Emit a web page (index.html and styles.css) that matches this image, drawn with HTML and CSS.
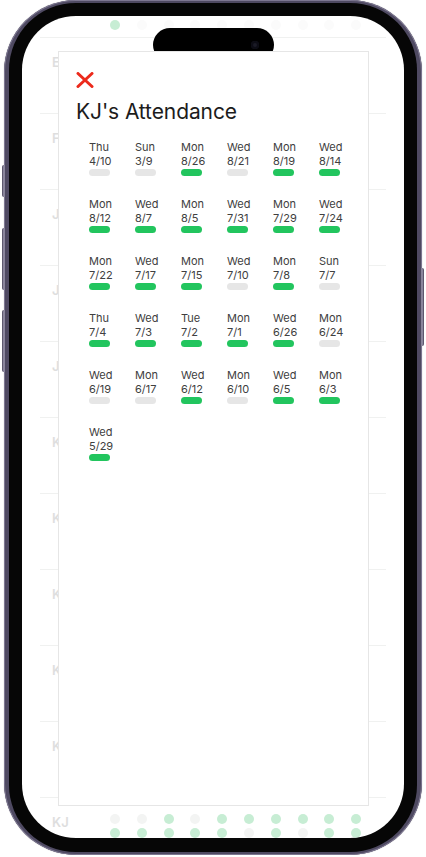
FILE: index.html
```html
<!DOCTYPE html>
<html lang="en">
<head>
<meta charset="utf-8">
<title>KJ's Attendance</title>
<link rel="stylesheet" href="styles.css">
</head>
<body>
<div class="phone">
  <span class="hw hw-action"></span>
  <span class="hw hw-volup"></span>
  <span class="hw hw-voldown"></span>
  <span class="hw hw-power"></span>
  <div class="bezel">
    <div class="screen">
      <div class="list">
        <div class="row">
          <span class="label"></span>
          <div class="dots">
            <i class="d"></i><i class="d"></i><i class="d g"></i><i class="d"></i><i class="d g"></i><i class="d g"></i><i class="d"></i><i class="d"></i><i class="d"></i><i class="d"></i>
            <i class="d"></i><i class="d"></i><i class="d"></i><i class="d"></i><i class="d"></i><i class="d"></i><i class="d"></i><i class="d"></i><i class="d"></i><i class="d"></i>
            <i class="d"></i><i class="d"></i><i class="d"></i><i class="d"></i><i class="d"></i><i class="d"></i><i class="d"></i><i class="d"></i><i class="d"></i><i class="d"></i>
            <i class="d g"></i><i class="d f"></i><i class="d f"></i><i class="d f"></i><i class="d f"></i><i class="d f"></i><i class="d f"></i><i class="d f"></i><i class="d f"></i><i class="d f"></i>
          </div>
        </div>
        <div class="row"><span class="label">EM</span></div>
        <div class="row"><span class="label">FR</span></div>
        <div class="row"><span class="label">JD</span></div>
        <div class="row"><span class="label">JL</span></div>
        <div class="row"><span class="label">JP</span></div>
        <div class="row"><span class="label">KA</span></div>
        <div class="row"><span class="label">KB</span></div>
        <div class="row"><span class="label">KC</span></div>
        <div class="row"><span class="label">KD</span></div>
        <div class="row"><span class="label">KE</span></div>
        <div class="row">
          <span class="label">KJ</span>
          <div class="dots">
            <i class="d"></i><i class="d"></i><i class="d g"></i><i class="d"></i><i class="d g"></i><i class="d g"></i><i class="d g"></i><i class="d g"></i><i class="d g"></i><i class="d g"></i>
            <i class="d g"></i><i class="d g"></i><i class="d g"></i><i class="d g"></i><i class="d g"></i><i class="d"></i><i class="d g"></i><i class="d"></i><i class="d g"></i><i class="d g"></i>
          </div>
        </div>
      </div>

      <div class="island"><span class="cam"></span></div>

      <div class="card">
        <svg class="close" width="18" height="16" viewBox="0 0 18 16" aria-label="Close">
          <path d="M2 1.5 L16 14.5 M16 1.5 L2 14.5" stroke="#ec2a1c" stroke-width="3" stroke-linecap="round" fill="none"/>
        </svg>
        <h1 class="title">KJ's Attendance</h1>
        <div class="grid">
          <div class="item"><div class="txt">Thu</div><div class="txt">4/10</div><div class="bar"></div></div>
          <div class="item"><div class="txt">Sun</div><div class="txt">3/9</div><div class="bar"></div></div>
          <div class="item"><div class="txt">Mon</div><div class="txt">8/26</div><div class="bar on"></div></div>
          <div class="item"><div class="txt">Wed</div><div class="txt">8/21</div><div class="bar"></div></div>
          <div class="item"><div class="txt">Mon</div><div class="txt">8/19</div><div class="bar on"></div></div>
          <div class="item"><div class="txt">Wed</div><div class="txt">8/14</div><div class="bar on"></div></div>

          <div class="item"><div class="txt">Mon</div><div class="txt">8/12</div><div class="bar on"></div></div>
          <div class="item"><div class="txt">Wed</div><div class="txt">8/7</div><div class="bar on"></div></div>
          <div class="item"><div class="txt">Mon</div><div class="txt">8/5</div><div class="bar on"></div></div>
          <div class="item"><div class="txt">Wed</div><div class="txt">7/31</div><div class="bar on"></div></div>
          <div class="item"><div class="txt">Mon</div><div class="txt">7/29</div><div class="bar on"></div></div>
          <div class="item"><div class="txt">Wed</div><div class="txt">7/24</div><div class="bar on"></div></div>

          <div class="item"><div class="txt">Mon</div><div class="txt">7/22</div><div class="bar on"></div></div>
          <div class="item"><div class="txt">Wed</div><div class="txt">7/17</div><div class="bar on"></div></div>
          <div class="item"><div class="txt">Mon</div><div class="txt">7/15</div><div class="bar on"></div></div>
          <div class="item"><div class="txt">Wed</div><div class="txt">7/10</div><div class="bar"></div></div>
          <div class="item"><div class="txt">Mon</div><div class="txt">7/8</div><div class="bar on"></div></div>
          <div class="item"><div class="txt">Sun</div><div class="txt">7/7</div><div class="bar"></div></div>

          <div class="item"><div class="txt">Thu</div><div class="txt">7/4</div><div class="bar on"></div></div>
          <div class="item"><div class="txt">Wed</div><div class="txt">7/3</div><div class="bar on"></div></div>
          <div class="item"><div class="txt">Tue</div><div class="txt">7/2</div><div class="bar on"></div></div>
          <div class="item"><div class="txt">Mon</div><div class="txt">7/1</div><div class="bar on"></div></div>
          <div class="item"><div class="txt">Wed</div><div class="txt">6/26</div><div class="bar on"></div></div>
          <div class="item"><div class="txt">Mon</div><div class="txt">6/24</div><div class="bar"></div></div>

          <div class="item"><div class="txt">Wed</div><div class="txt">6/19</div><div class="bar"></div></div>
          <div class="item"><div class="txt">Mon</div><div class="txt">6/17</div><div class="bar"></div></div>
          <div class="item"><div class="txt">Wed</div><div class="txt">6/12</div><div class="bar on"></div></div>
          <div class="item"><div class="txt">Mon</div><div class="txt">6/10</div><div class="bar"></div></div>
          <div class="item"><div class="txt">Wed</div><div class="txt">6/5</div><div class="bar on"></div></div>
          <div class="item"><div class="txt">Mon</div><div class="txt">6/3</div><div class="bar on"></div></div>

          <div class="item"><div class="txt">Wed</div><div class="txt">5/29</div><div class="bar on"></div></div>
        </div>
      </div>
    </div>
  </div>
</div>
</body>
</html>
```
FILE: styles.css
```css
* { box-sizing: border-box; }

html, body {
  margin: 0;
  padding: 0;
  background: #ffffff;
  font-family: Inter, "Noto Sans", "Liberation Sans", sans-serif;
}

.phone {
  position: relative;
  width: 418px;
  height: 855px;
  margin-left: 4px;
  padding: 3px 5px;
  border-radius: 72px;
  background: #4f4a62;
  box-shadow: inset 0 0 0 1px #7d7791, 0 0 1px rgba(0,0,0,0.4);
}

.hw {
  position: absolute;
  width: 3px;
  background: #8a859c;
  border-left: 1px solid #5d586e;
  border-radius: 2px 0 0 2px;
}
.hw-action  { left: -2px; top: 165px; height: 32px; }
.hw-volup   { left: -2px; top: 228px; height: 62px; }
.hw-voldown { left: -2px; top: 310px; height: 62px; }
.hw-power   { right: -2px; top: 268px; height: 78px; border-left: 0; border-right: 1px solid #5d586e; border-radius: 0 2px 2px 0; }

.bezel {
  height: 100%;
  background: #060606;
  border-radius: 67px;
  padding: 13px 13px 14px 13px;
}

.screen {
  position: relative;
  height: 100%;
  background: #ffffff;
  border-radius: 54px;
  overflow: hidden;
}

/* faded background list */
.list {
  margin-top: -54px;
}
.row {
  display: flex;
  align-items: flex-start;
  height: 76px;
  margin: 0 18px;
  padding: 16px 0 0 12px;
  border-bottom: 1px solid #f0f1f0;
}
.label {
  width: 58px;
  flex: none;
  font-size: 13px;
  font-weight: 600;
  line-height: 16px;
  color: #dedede;
}
.dots {
  display: grid;
  grid-template-columns: repeat(10, 10px);
  column-gap: 16.8px;
  row-gap: 4px;
}
.d {
  display: block;
  width: 10px;
  height: 10px;
  border-radius: 50%;
  background: #f3f4f3;
}
.d.f { background: #fbfbfb; }
.d.g { background: #c7edd4; }

.island {
  position: absolute;
  left: 131px;
  top: 12px;
  width: 121px;
  height: 34px;
  border-radius: 17px;
  background: #000;
  display: flex;
  align-items: center;
  justify-content: flex-end;
  padding-right: 15px;
}
.cam {
  width: 8px;
  height: 8px;
  border-radius: 50%;
  background: #1b1b26;
  box-shadow: inset 0 0 0 2px #0c0c14;
}

/* modal card */
.card {
  position: absolute;
  left: 36px;
  top: 35px;
  width: 311px;
  height: 755px;
  background: #ffffff;
  border: 1px solid #e6e6e6;
  padding: 20px 17px;
}
.close {
  display: block;
}
.title {
  margin: 11px 0 0 0;
  font-size: 21px;
  font-weight: 400;
  line-height: 26px;
  color: #1c1c1c;
  letter-spacing: -0.1px;
}
.grid {
  display: grid;
  grid-template-columns: repeat(6, 46px);
  row-gap: 21px;
  margin: 15px 0 0 13px;
}
.txt {
  font-size: 11px;
  line-height: 14px;
  color: #404040;
}
.bar {
  width: 21px;
  height: 7px;
  margin-top: 1px;
  border-radius: 4px;
  background: #e6e6e6;
}
.bar.on { background: #22c55e; }
```
